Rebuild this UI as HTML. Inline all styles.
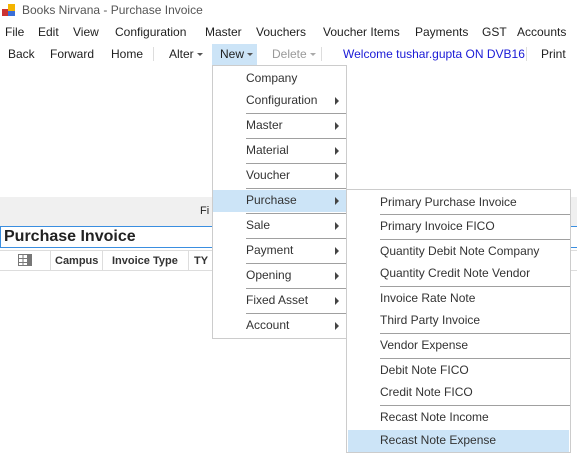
<!DOCTYPE html><html><head><style>
*{margin:0;padding:0;box-sizing:border-box}
body{width:577px;height:469px;overflow:hidden;background:#fff;font-family:"Liberation Sans",sans-serif;font-size:12px;color:#1e1e1e;position:relative}
.a{position:absolute;white-space:nowrap}
.m{position:absolute;background:#fff;border:1px solid #ccc}
.it{position:absolute;left:0;right:0;height:22px;line-height:21px;color:#333}
.it span{position:absolute}
.hl{background:#cce4f7}
.sep{position:absolute;height:1px;background:#a0a0a0}
.arr{position:absolute;width:0;height:0;border-top:4px solid transparent;border-bottom:4px solid transparent;border-left:4px solid #444}
.cd{display:inline-block;width:0;height:0;border-left:3px solid transparent;border-right:3px solid transparent;border-top:3px solid #555;vertical-align:middle;margin-left:3px}
</style></head><body>
<svg class="a" style="left:2px;top:4px" width="14" height="13"><rect x="0" y="5" width="6" height="7" fill="#c33"/><rect x="6" y="0" width="7" height="7" fill="#f4b400"/><rect x="6" y="7" width="7" height="5" fill="#3a6fd8"/></svg>
<div class="a" style="left:22px;top:3px;color:#555">Books Nirvana - Purchase Invoice</div>
<div class="a" style="left:5px;top:25px">File</div>
<div class="a" style="left:38px;top:25px">Edit</div>
<div class="a" style="left:73px;top:25px">View</div>
<div class="a" style="left:115px;top:25px">Configuration</div>
<div class="a" style="left:205px;top:25px">Master</div>
<div class="a" style="left:256px;top:25px">Vouchers</div>
<div class="a" style="left:323px;top:25px">Voucher Items</div>
<div class="a" style="left:415px;top:25px">Payments</div>
<div class="a" style="left:482px;top:25px">GST</div>
<div class="a" style="left:517px;top:25px">Accounts</div>
<div class="a" style="left:8px;top:47px">Back</div>
<div class="a" style="left:50px;top:47px">Forward</div>
<div class="a" style="left:111px;top:47px">Home</div>
<div class="a" style="left:153px;top:47px;width:1px;height:14px;background:#ddd"></div>
<div class="a" style="left:169px;top:47px">Alter<span class="cd"></span></div>
<div class="a" style="left:212px;top:44px;width:45px;height:22px;background:#cce4f7"></div>
<div class="a" style="left:220px;top:47px">New<span class="cd"></span></div>
<div class="a" style="left:272px;top:47px;color:#999">Delete<span class="cd" style="border-top-color:#aaa"></span></div>
<div class="a" style="left:321px;top:47px;width:1px;height:14px;background:#ddd"></div>
<div class="a" style="left:343px;top:47px;color:#1a1ad6">Welcome tushar.gupta ON DVB16</div>
<div class="a" style="left:526px;top:47px;width:1px;height:14px;background:#ddd"></div>
<div class="a" style="left:541px;top:47px">Print</div>
<div class="a" style="left:0;top:197px;width:577px;height:29px;background:#f0f0f0"></div>
<div class="a" style="left:200px;top:205px;font-size:11px">Fi</div>
<div class="a" style="left:0;top:226px;width:577px;height:22px;border-top:1.5px solid #3a8ee0;border-bottom:1.5px solid #3a8ee0;border-left:1.5px solid #3a8ee0"></div>
<div class="a" style="left:4px;top:228px;font-size:16px;font-weight:bold;color:#222">Purchase Invoice</div>
<div class="a" style="left:0;top:250px;width:577px;height:21px;border-top:1px solid #ddd;border-bottom:1px solid #ddd;background:#fff"></div>
<div class="a" style="left:50px;top:250px;width:1px;height:21px;background:#ddd"></div>
<div class="a" style="left:102px;top:250px;width:1px;height:21px;background:#ddd"></div>
<div class="a" style="left:188px;top:250px;width:1px;height:21px;background:#ddd"></div>
<svg class="a" style="left:18px;top:254px" width="15" height="13"><rect x="0.5" y="0.5" width="13" height="11" fill="none" stroke="#777"/><path d="M0 4.5H14M0 8.5H14M5 0V12M9.5 0V12" stroke="#777"/><rect x="10" y="0" width="4" height="12" fill="#777"/></svg>
<div class="a" style="left:55px;top:255px;font-size:11px;font-weight:bold;color:#333">Campus</div>
<div class="a" style="left:112px;top:255px;font-size:11px;font-weight:bold;color:#333">Invoice Type</div>
<div class="a" style="left:194px;top:255px;font-size:11px;font-weight:bold;color:#333">TY</div>

<div class="m" style="left:212px;top:65px;width:135px;height:274px">
<div class="it" style="top:2px"><span style="left:33px">Company</span></div>
<div class="it" style="top:24px"><span style="left:33px">Configuration</span><i class="arr" style="left:122px;top:7px"></i></div>
<div class="sep" style="left:33px;right:0;top:47px"></div>
<div class="it" style="top:49px"><span style="left:33px">Master</span><i class="arr" style="left:122px;top:7px"></i></div>
<div class="sep" style="left:33px;right:0;top:72px"></div>
<div class="it" style="top:74px"><span style="left:33px">Material</span><i class="arr" style="left:122px;top:7px"></i></div>
<div class="sep" style="left:33px;right:0;top:97px"></div>
<div class="it" style="top:99px"><span style="left:33px">Voucher</span><i class="arr" style="left:122px;top:7px"></i></div>
<div class="sep" style="left:33px;right:0;top:122px"></div>
<div class="it hl" style="top:124px"><span style="left:33px">Purchase</span><i class="arr" style="left:122px;top:7px"></i></div>
<div class="sep" style="left:33px;right:0;top:147px"></div>
<div class="it" style="top:149px"><span style="left:33px">Sale</span><i class="arr" style="left:122px;top:7px"></i></div>
<div class="sep" style="left:33px;right:0;top:172px"></div>
<div class="it" style="top:174px"><span style="left:33px">Payment</span><i class="arr" style="left:122px;top:7px"></i></div>
<div class="sep" style="left:33px;right:0;top:197px"></div>
<div class="it" style="top:199px"><span style="left:33px">Opening</span><i class="arr" style="left:122px;top:7px"></i></div>
<div class="sep" style="left:33px;right:0;top:222px"></div>
<div class="it" style="top:224px"><span style="left:33px">Fixed Asset</span><i class="arr" style="left:122px;top:7px"></i></div>
<div class="sep" style="left:33px;right:0;top:247px"></div>
<div class="it" style="top:249px"><span style="left:33px">Account</span><i class="arr" style="left:122px;top:7px"></i></div>
</div>

<div class="m" style="left:346px;top:189px;width:225px;height:264px">
<div class="it" style="top:2px"><span style="left:33px">Primary Purchase Invoice</span></div>
<div class="sep" style="left:33px;right:0;top:24px"></div>
<div class="it" style="top:26px"><span style="left:33px">Primary Invoice FICO</span></div>
<div class="sep" style="left:33px;right:0;top:49px"></div>
<div class="it" style="top:51px"><span style="left:33px">Quantity Debit Note Company</span></div>
<div class="it" style="top:73px"><span style="left:33px">Quantity Credit Note Vendor</span></div>
<div class="sep" style="left:33px;right:0;top:96px"></div>
<div class="it" style="top:98px"><span style="left:33px">Invoice Rate Note</span></div>
<div class="it" style="top:120px"><span style="left:33px">Third Party Invoice</span></div>
<div class="sep" style="left:33px;right:0;top:143px"></div>
<div class="it" style="top:145px"><span style="left:33px">Vendor Expense</span></div>
<div class="sep" style="left:33px;right:0;top:168px"></div>
<div class="it" style="top:170px"><span style="left:33px">Debit Note FICO</span></div>
<div class="it" style="top:192px"><span style="left:33px">Credit Note FICO</span></div>
<div class="sep" style="left:33px;right:0;top:215px"></div>
<div class="it" style="top:217px"><span style="left:33px">Recast Note Income</span></div>
<div class="it hl" style="top:240px;left:1px;right:1px"><span style="left:32px">Recast Note Expense</span></div>
</div>
</body></html>
